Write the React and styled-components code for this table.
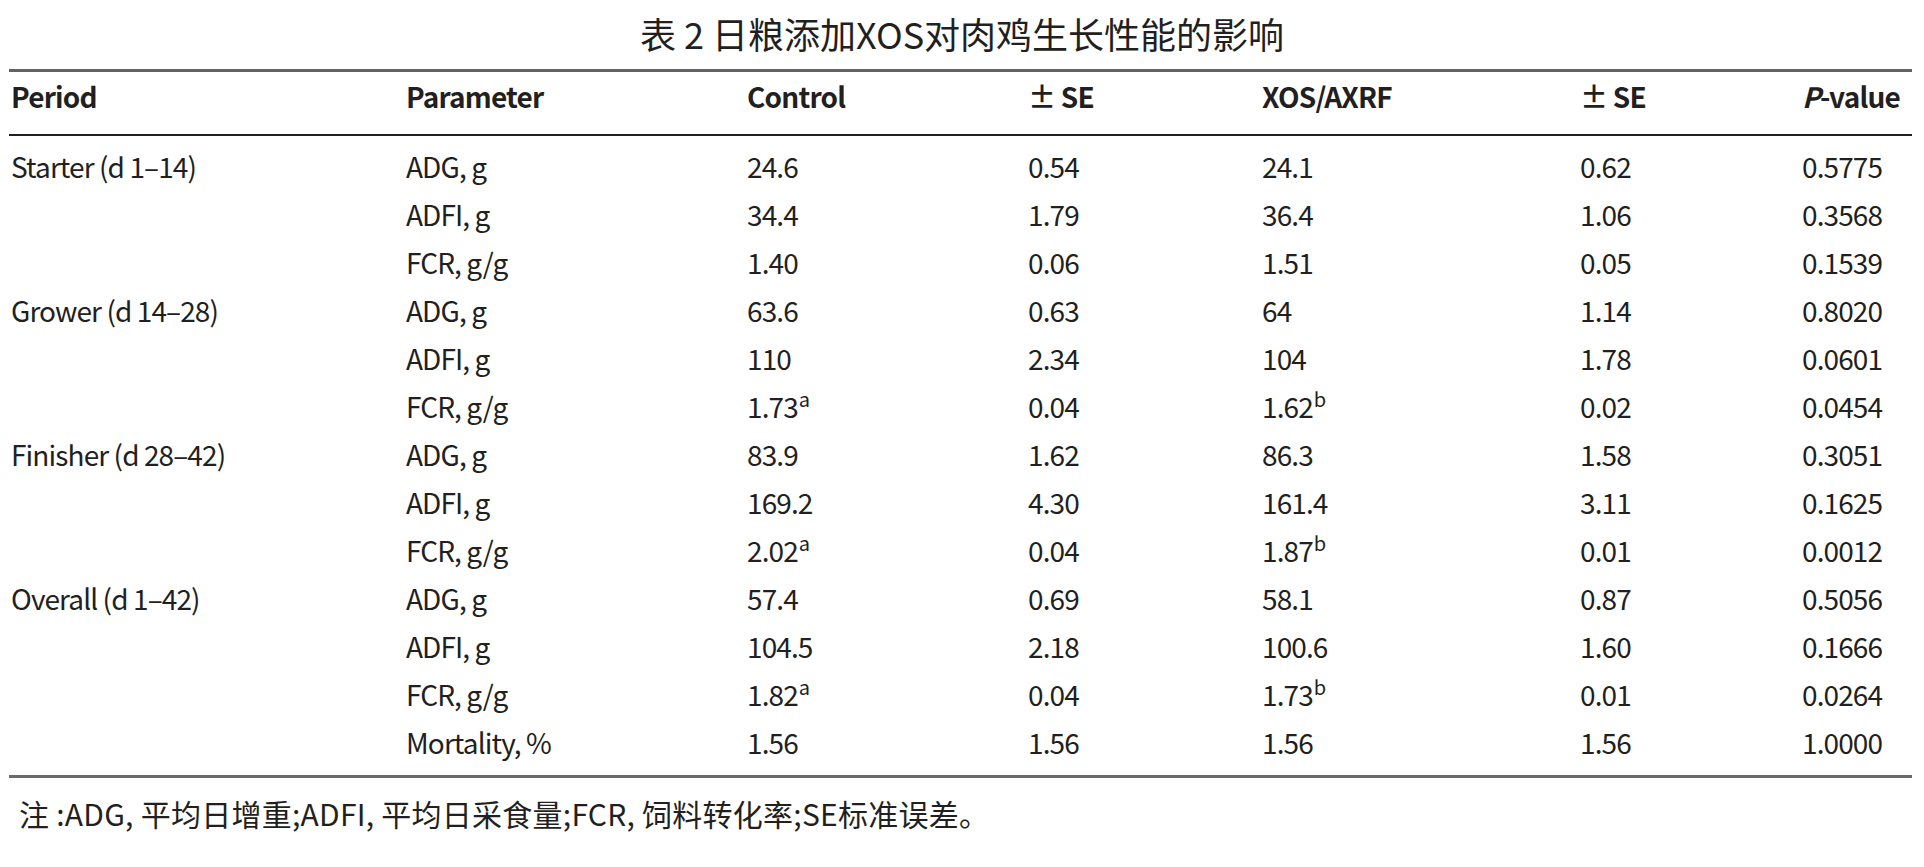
import React from 'react';
import styled, { createGlobalStyle } from 'styled-components';

const GlobalStyle = createGlobalStyle`
  html, body {
    margin: 0;
    padding: 0;
    background: #fff;
  }
  body {
    font-family: "Noto Sans CJK SC", "Noto Sans", sans-serif;
    color: #231f20;
  }
`;

const Page = styled.div`
  width: 1924px;
  height: 867px;
  padding: 12px 12px 0 9px;
  box-sizing: border-box;
`;

const Title = styled.h1`
  margin: 0 -12px 15px -9px;
  font-size: 36px;
  font-weight: 400;
  line-height: 42px;
  text-align: center;
`;

const Table = styled.table`
  width: 1903px;
  border-collapse: collapse;
  table-layout: fixed;
  border-top: 3px solid #626262;
  border-bottom: 3px solid #6a6a6a;
`;

const HeadCell = styled.th`
  padding: 0 0 14px ${(p) => (p.first ? '2px' : '0')};
  font-size: 28px;
  font-weight: 700;
  letter-spacing: -0.8px;
  line-height: 48px;
  text-align: left;
  white-space: nowrap;
  border-bottom: 2px solid #231f20;
  i {
    font-style: italic;
  }
`;

const Cell = styled.td`
  padding: ${(p) => (p.top ? '6px' : '0')} 0 ${(p) => (p.last ? '9px' : '0')}
    ${(p) => (p.first ? '2px' : '0')};
  font-size: 28px;
  letter-spacing: -0.9px;
  line-height: 48px;
  white-space: nowrap;
  vertical-align: top;
`;

const Sup = styled.sup`
  font-size: 20px;
  line-height: 0;
  letter-spacing: 0;
  margin-left: 1px;
  vertical-align: 11px;
`;

const Note = styled.p`
  margin: 15px 0 0 10px;
  font-size: 30px;
  line-height: 40px;
  letter-spacing: 0.25px;
`;

const widths = [397, 341, 281, 234, 318, 222, 110];

const rows = [
  ['Starter (d 1–14)', 'ADG, g', '24.6', '0.54', '24.1', '0.62', '0.5775'],
  ['', 'ADFI, g', '34.4', '1.79', '36.4', '1.06', '0.3568'],
  ['', 'FCR, g/g', '1.40', '0.06', '1.51', '0.05', '0.1539'],
  ['Grower (d 14–28)', 'ADG, g', '63.6', '0.63', '64', '1.14', '0.8020'],
  ['', 'ADFI, g', '110', '2.34', '104', '1.78', '0.0601'],
  ['', 'FCR, g/g', ['1.73', 'a'], '0.04', ['1.62', 'b'], '0.02', '0.0454'],
  ['Finisher (d 28–42)', 'ADG, g', '83.9', '1.62', '86.3', '1.58', '0.3051'],
  ['', 'ADFI, g', '169.2', '4.30', '161.4', '3.11', '0.1625'],
  ['', 'FCR, g/g', ['2.02', 'a'], '0.04', ['1.87', 'b'], '0.01', '0.0012'],
  ['Overall (d 1–42)', 'ADG, g', '57.4', '0.69', '58.1', '0.87', '0.5056'],
  ['', 'ADFI, g', '104.5', '2.18', '100.6', '1.60', '0.1666'],
  ['', 'FCR, g/g', ['1.82', 'a'], '0.04', ['1.73', 'b'], '0.01', '0.0264'],
  ['', 'Mortality, %', '1.56', '1.56', '1.56', '1.56', '1.0000'],
];

const renderValue = (v) =>
  Array.isArray(v) ? (
    <>
      {v[0]}
      <Sup>{v[1]}</Sup>
    </>
  ) : (
    v
  );

const App = () => (
  <Page>
    <GlobalStyle />
    <Title>表 2 日粮添加XOS对肉鸡生长性能的影响</Title>
    <Table>
      <colgroup>
        {widths.map((w, k) => (
          <col key={`col_${k}`} style={{ width: w }} />
        ))}
      </colgroup>
      <thead>
        <tr>
          <HeadCell first>Period</HeadCell>
          <HeadCell>Parameter</HeadCell>
          <HeadCell>Control</HeadCell>
          <HeadCell>± SE</HeadCell>
          <HeadCell>XOS/AXRF</HeadCell>
          <HeadCell>± SE</HeadCell>
          <HeadCell>
            <i>P</i>-value
          </HeadCell>
        </tr>
      </thead>
      <tbody>
        {rows.map((r, i) => (
          <tr key={`row_${i}`}>
            {r.map((v, k) => (
              <Cell
                key={`cell_${i}_${k}`}
                first={k === 0}
                top={i === 0}
                last={i === rows.length - 1}
              >
                {renderValue(v)}
              </Cell>
            ))}
          </tr>
        ))}
      </tbody>
    </Table>
    <Note>注 :ADG, 平均日增重;ADFI, 平均日采食量;FCR, 饲料转化率;SE标准误差。</Note>
  </Page>
);

export default App;
